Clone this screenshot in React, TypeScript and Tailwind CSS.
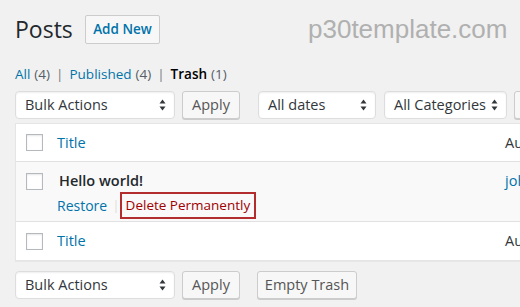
import React from 'react'

const font = { fontFamily: '"Open Sans", "Noto Sans", sans-serif' }

function Arrows() {
  return (
    <svg width="7" height="12" viewBox="0 0 7 12" className="shrink-0">
      <path d="M3.5 0.5 L6.5 4.5 L0.5 4.5 Z" fill="#32373c" />
      <path d="M3.5 11.5 L6.5 7.5 L0.5 7.5 Z" fill="#32373c" />
    </svg>
  )
}

function Select({ label, width }: { label: string; width: string }) {
  return (
    <div
      className={`${width} h-[28px] shrink-0 flex items-center justify-between pl-[9px] pr-[8px] bg-white border border-[#dddddd] rounded-[4px] shadow-[inset_0_1px_2px_rgba(0,0,0,0.07)] text-[14.5px] text-[#32373c]`}
    >
      <span>{label}</span>
      <Arrows />
    </div>
  )
}

function Button({ children, width }: { children: React.ReactNode; width: string }) {
  return (
    <div
      className={`${width} h-[28px] shrink-0 flex items-center justify-center bg-[#f7f7f7] border border-[#cccccc] rounded-[3px] shadow-[0_1px_0_#cccccc] text-[14.5px] text-[#555555]`}
    >
      {children}
    </div>
  )
}

function Checkbox() {
  return <div className="w-[17px] h-[17px] shrink-0 bg-white border border-[#b4b9be] shadow-[inset_0_1px_2px_rgba(0,0,0,0.1)]" />
}

export default function App() {
  return (
    <div className="w-[520px] h-[307px] overflow-hidden bg-[#f1f1f1] text-[#32373c]" style={font}>
      <div className="w-[640px] pl-[15px] pt-[12px]">
        {/* heading */}
        <div className="h-[34px] flex items-center">
          <h1 className="w-[58px] text-[23px] leading-none text-[#23282d]">Posts</h1>
          <div className="ml-[12px] w-[75px] h-[29px] flex items-center justify-center bg-[#f7f7f7] border border-[#cccccc] rounded-[2px] text-[13.5px] font-semibold text-[#0073aa]">
            Add New
          </div>
          <div
            className="ml-[148px] text-[26px] leading-none text-[#b0b0b0] whitespace-nowrap"
            style={{ fontFamily: '"Liberation Sans", Arial, sans-serif' }}
          >
            p30template.com
          </div>
        </div>

        {/* subsubsub */}
        <div className="mt-[18px] h-[20px] flex items-center text-[13.5px]">
          <span className="text-[#0073aa]">All</span>
          <span className="ml-[4px] text-[#555d66]">(4)</span>
          <span className="mx-[6px] text-[#72777c]">|</span>
          <span className="text-[#0073aa]">Published</span>
          <span className="ml-[4px] text-[#555d66]">(4)</span>
          <span className="mx-[6px] text-[#72777c]">|</span>
          <span className="font-semibold text-[#000000]">Trash</span>
          <span className="ml-[4px] text-[#555d66]">(1)</span>
        </div>

        {/* top actions */}
        <div className="mt-[7px] flex items-center">
          <Select label="Bulk Actions" width="w-[160px]" />
          <div className="ml-[7px]">
            <Button width="w-[58px]">Apply</Button>
          </div>
          <div className="ml-[18px]">
            <Select label="All dates" width="w-[118px]" />
          </div>
          <div className="ml-[8px]">
            <Select label="All Categories" width="w-[123px]" />
          </div>
          <div className="ml-[7px]">
            <Button width="w-[60px]">Filter</Button>
          </div>
        </div>

        {/* table */}
        <div className="mt-[4px] w-[620px] bg-white border border-[#e5e5e5] shadow-[0_1px_1px_rgba(0,0,0,0.04)] text-[14.5px]">
          <div className="h-[38px] flex items-center border-b border-[#e1e1e1]">
            <div className="w-[41px] pl-[10px]"><Checkbox /></div>
            <div className="w-[448px] text-[#0073aa]">Title</div>
            <div className="text-[#32373c]">Author</div>
          </div>
          <div className="h-[60px] flex bg-[#f9f9f9] border-b border-[#e1e1e1]">
            <div className="w-[41px] pl-[10px] pt-[11px]"><Checkbox /></div>
            <div className="w-[448px] pt-[9px]">
              <div className="h-[20px] flex items-center pl-[2px] font-semibold text-[#23282d]">Hello world!</div>
              <div className="mt-[1px] flex items-center text-[13.5px]">
                <span className="text-[14px] text-[#0073aa]">Restore</span>
                <span className="ml-[5px] text-[#dddddd]">|</span>
                <span className="h-[27px] px-[4px] flex items-center border-2 border-[#b32d2e] text-[#a00000]">
                  Delete Permanently
                </span>
              </div>
            </div>
            <div className="pt-[9px] h-[20px] box-content flex items-center text-[#0073aa]">john</div>
          </div>
          <div className="h-[38px] flex items-center">
            <div className="w-[41px] pl-[10px]"><Checkbox /></div>
            <div className="w-[448px] text-[#0073aa]">Title</div>
            <div className="text-[#32373c]">Author</div>
          </div>
        </div>

        {/* bottom actions */}
        <div className="mt-[10px] flex items-center">
          <Select label="Bulk Actions" width="w-[160px]" />
          <div className="ml-[7px]">
            <Button width="w-[58px]">Apply</Button>
          </div>
          <div className="ml-[17px]">
            <Button width="w-[100px]">Empty Trash</Button>
          </div>
        </div>
      </div>
    </div>
  )
}
